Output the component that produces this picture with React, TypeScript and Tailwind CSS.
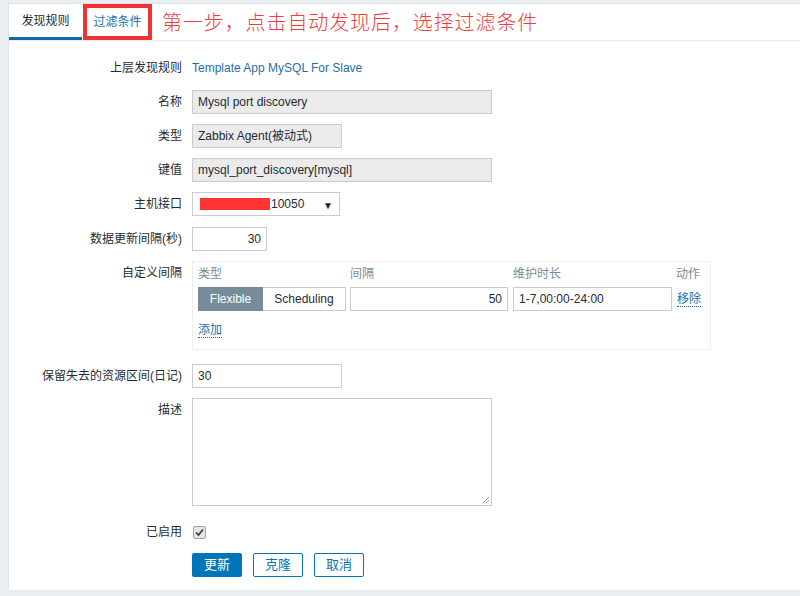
import React from "react";

const font = { fontFamily: '"Liberation Sans", Arial, "Noto Sans CJK SC", sans-serif' };

function Row({ label, children, className = "" }: { label: string; children: React.ReactNode; className?: string }) {
  return (
    <div className={`flex items-start gap-[10px] ${className}`}>
      <div className="w-[173px] shrink-0 text-right leading-[24px] text-[#1f2c33]">{label}</div>
      <div className="flex-1">{children}</div>
    </div>
  );
}

function TextBox({ value, width, readOnly = false, right = false }: { value: string; width: number; readOnly?: boolean; right?: boolean }) {
  return (
    <div
      className={`flex h-[24px] items-center border border-[#cccccc] px-[5px] text-[#1f2c33] ${readOnly ? "bg-[#ebebeb]" : "bg-white"} ${right ? "justify-end" : ""}`}
      style={{ width }}
    >
      {value}
    </div>
  );
}

export default function App() {
  return (
    <div className="h-[596px] w-[800px] overflow-hidden bg-[#ebeef0] pl-[8px] pt-[3px] text-[12px]" style={font}>
      <div className="h-[587px] border-l border-t border-[#dfe4e7] bg-white">
        <div className="flex h-[37px] items-stretch border-b border-[#ebeef0]">
          <div className="flex w-[73px] items-center justify-center border-b-[3px] border-[#0f6aa3] text-[#1f2c33]">发现规则</div>
          <div className="ml-[1px] flex w-[69px] items-center justify-center border-[4px] border-[#f03232] text-[#1f6fa8]">过滤条件</div>
          <div
            className="ml-[10px] flex items-center text-[20px] tracking-[0.9px] text-[#ee3d3d]"
            style={{ fontFamily: '"Noto Sans CJK SC", sans-serif', fontWeight: 300 }}
          >
            第一步，点击自动发现后，选择过滤条件
          </div>
        </div>

        <div className="flex flex-col pt-[15px]">
          <Row label="上层发现规则">
            <div className="leading-[24px] text-[#1f6fa8]">Template App MySQL For Slave</div>
          </Row>
          <Row label="名称" className="mt-[10px]">
            <TextBox value="Mysql port discovery" width={300} readOnly />
          </Row>
          <Row label="类型" className="mt-[10px]">
            <TextBox value="Zabbix Agent(被动式)" width={150} readOnly />
          </Row>
          <Row label="键值" className="mt-[10px]">
            <TextBox value="mysql_port_discovery[mysql]" width={300} readOnly />
          </Row>
          <Row label="主机接口" className="mt-[10px]">
            <div className="relative flex h-[24px] w-[148px] items-center border border-[#cccccc] bg-white pl-[7px] text-[#1f2c33]">
              <span className="mr-[1px] inline-block h-[12px] w-[70px] bg-[#ff3535]" />
              <span>10050</span>
              <span className="absolute right-[6px] top-[5px] text-[10px]">▼</span>
            </div>
          </Row>
          <Row label="数据更新间隔(秒)" className="mt-[11px]">
            <TextBox value="30" width={75} right />
          </Row>
          <Row label="自定义间隔" className="mt-[10px]">
            <div className="w-[519px] border border-[#ebeef0] px-[5px] pb-[10px] pt-[4px]">
              <div className="flex h-[16px] items-center text-[#768d99]">
                <div className="w-[152px]">类型</div>
                <div className="w-[163px]">间隔</div>
                <div className="w-[163px]">维护时长</div>
                <div>动作</div>
              </div>
              <div className="mt-[5px] flex items-center">
                <div className="flex h-[24px] w-[148px]">
                  <div className="flex w-[65px] items-center justify-center bg-[#768d99] text-white">Flexible</div>
                  <div className="flex flex-1 items-center justify-center border border-l-0 border-[#cccccc] text-[#1f2c33]">Scheduling</div>
                </div>
                <div className="ml-[4px] flex h-[24px] w-[158px] items-center justify-end border border-[#cccccc] px-[5px] text-[#1f2c33]">50</div>
                <div className="ml-[5px] flex h-[24px] w-[159px] items-center border border-[#cccccc] px-[5px] text-[#1f2c33]">1-7,00:00-24:00</div>
                <div className="ml-[5px] border-b border-dotted border-[#1f6fa8] leading-[14px] text-[#1f6fa8]">移除</div>
              </div>
              <div className="mt-[12px] inline-block border-b border-dotted border-[#1f6fa8] leading-[14px] text-[#1f6fa8]">添加</div>
            </div>
          </Row>
          <Row label="保留失去的资源区间(日记)" className="mt-[14px]">
            <TextBox value="30" width={150} />
          </Row>
          <Row label="描述" className="mt-[10px]">
            <div className="relative h-[108px] w-[300px] border border-[#cccccc] bg-white">
              <svg className="absolute bottom-[1px] right-[1px]" width="9" height="9" viewBox="0 0 9 9">
                <path d="M8 2 L2 8 M8 5 L5 8" stroke="#999" strokeWidth="1" />
              </svg>
            </div>
          </Row>
          <Row label="已启用" className="mt-[14px]">
            <div className="flex h-[24px] items-center">
              <div className="ml-[1px] flex h-[13px] w-[13px] items-center justify-center rounded-[2px] border border-[#a0a0a0] bg-[#e6e6e6]">
                <svg width="9" height="9" viewBox="0 0 9 9">
                  <path d="M1 4.5 L3.5 7 L8 1.5" stroke="#333" strokeWidth="1.6" fill="none" />
                </svg>
              </div>
            </div>
          </Row>
          <div className="ml-[183px] mt-[9px] flex gap-[11px]">
            <div className="flex h-[24px] w-[50px] items-center justify-center rounded-[2px] bg-[#0275b8] text-[13px] text-white">更新</div>
            <div className="flex h-[24px] w-[50px] items-center justify-center rounded-[2px] border border-[#0275b8] text-[13px] text-[#0275b8]">克隆</div>
            <div className="flex h-[24px] w-[50px] items-center justify-center rounded-[2px] border border-[#0275b8] text-[13px] text-[#0275b8]">取消</div>
          </div>
        </div>
      </div>
    </div>
  );
}
